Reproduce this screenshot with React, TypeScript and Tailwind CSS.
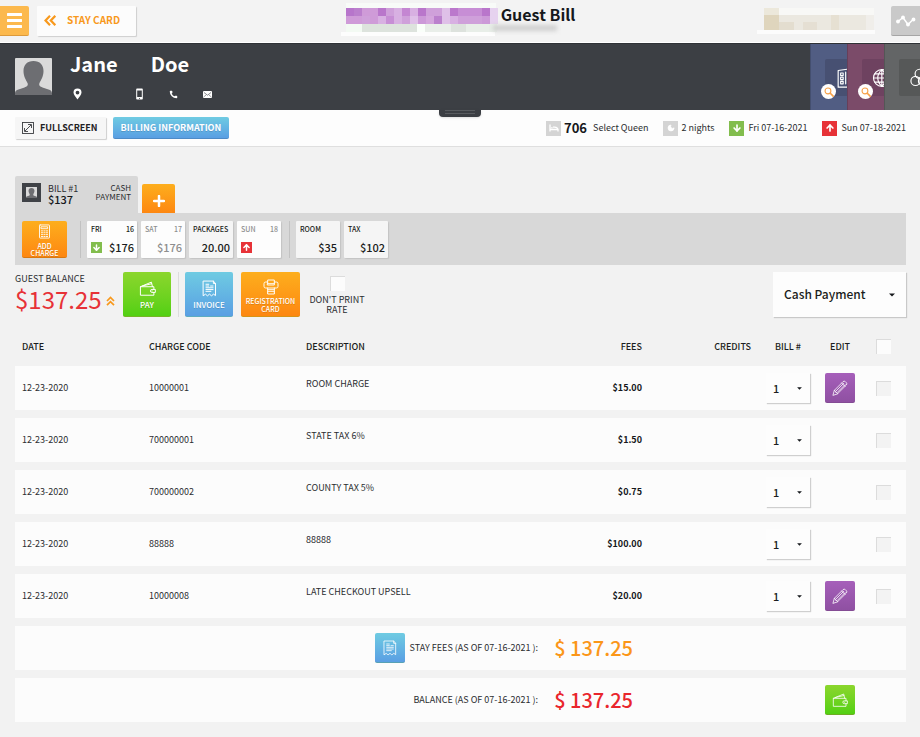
import { useState, type ReactNode } from "react";
import { clsx } from "clsx";
import { ArrowDown, ArrowUp, Moon, Phone } from "lucide-react";

const charges = [
  { date: "12-23-2020", code: "10000001", description: "ROOM CHARGE", fees: "$15.00", editable: true },
  { date: "12-23-2020", code: "700000001", description: "STATE TAX 6%", fees: "$1.50", editable: false },
  { date: "12-23-2020", code: "700000002", description: "COUNTY TAX 5%", fees: "$0.75", editable: false },
  { date: "12-23-2020", code: "88888", description: "88888", fees: "$100.00", editable: false },
  { date: "12-23-2020", code: "10000008", description: "LATE CHECKOUT UPSELL", fees: "$20.00", editable: true },
];

/* Redacted property name, one colour per tile */
const tilesTop = "#b775cb #bb7fcd #cf9bd8 #cf9bd8 #b976cb #cfa0da #d8b0e2 #c486d2 #d8b0e2 #b976cb #cfa0da #cfa0da #dfc0e8 #bb78cc #c78ed5 #c78ed5 #c78ed5 #b976cb #e6d2ef".split(" ");
const tilesBottom = "#cf9bd8 #cf9bd8 #cfa0da #cf9bd8 #d8b0e2 #c78ed5 #d8b0e2 #cfa0da #dfc0e8 #cc99d8 #d4a5dd #bb80cd #dfc0e8 #d8b0e2 #cfa0da #cfa0da #cfa0da #cc99d8 #e6d2ef".split(" ");

const orange = "bg-linear-to-b from-[#fdae1d] to-[#fd8711]";
const green = "bg-linear-to-b from-[#8bd62d] to-[#52d013]";
const blue = "bg-linear-to-b from-[#6fcbe2] to-[#5a9fe3]";
const purple = "bg-linear-to-b from-[#a65fba] to-[#8f50a2]";

function Glyph({ className, children }: { className?: string; children: ReactNode }) {
  return (
    <svg
      viewBox="0 0 24 24"
      className={className}
      fill="none"
      stroke="currentColor"
      strokeWidth="1.4"
      strokeLinejoin="round"
      strokeLinecap="round"
      aria-hidden="true"
    >
      {children}
    </svg>
  );
}

function WalletIcon({ className }: { className?: string }) {
  return (
    <Glyph className={className}>
      <path d="M2 9.5h19v3.8M21 17.5v4H2v-12L17.5 3l1.5 6.5M5 8.3l12.8-3" />
      <path d="M22.5 13.3h-4.2a2.1 2.1 0 0 0 0 4.2h4.2z" />
      <path d="M18.4 15.4h.3" />
    </Glyph>
  );
}

function InvoiceIcon({ className }: { className?: string }) {
  return (
    <Glyph className={className}>
      <path d="M3.5 1.5h14l3 3.5v17l-2.8-2-2.9 2.3-2.8-2.3-2.9 2.3-2.8-2.3-2.8 2zM17.5 1.5V5h3" />
      <path d="M7 6h4M7 8.5h4M7 11h10M7 13.5h10M7 16h7M13.5 8.5h3.5" />
    </Glyph>
  );
}

function CardPrinterIcon({ className }: { className?: string }) {
  return (
    <Glyph className={className}>
      <path d="M7 7V1.5h10V7M7 9h10V7H7zM7 4.500H4a2.500 2.500 0 0 0-2.500 2.500v4A2.500 2.500 0 0 0 4 13.500h16a2.500 2.500 0 0 0 2.500-2.500V7A2.500 2.500 0 0 0 20 4.500h-3" />
      <path d="M7 16h10M7 18.500h10M7 21v1.500h10V21M7 13.500V21M17 13.500V21" />
    </Glyph>
  );
}

function CalculatorIcon({ className }: { className?: string }) {
  return (
    <Glyph className={className}>
      <rect x="4" y="1.5" width="16" height="21" rx="1" />
      <path d="M7 4.5h10v3H7zM7 11h2M11 11h2M15 11h2M7 14h2M11 14h2M15 14h2M7 17h2M11 17h2M15 17h2M7 20h2M11 20h2M15 20h2" />
    </Glyph>
  );
}

function PencilIcon({ className }: { className?: string }) {
  return (
    <Glyph className={className}>
      <path d="M1.5 22.5l2-7L16.500 2.500a2.500 2.500 0 0 1 3.500 0l1.500 1.500a2.500 2.500 0 0 1 0 3.500L8.500 20.500zM3.500 15.500l1.500 1 .5 2 2 .5 1 1.500M6 16.500L17.500 5M8 18.500L19.500 7M14.500 4.500l5 5" />
    </Glyph>
  );
}

function Silhouette({ className }: { className?: string }) {
  return (
    <svg viewBox="0 0 37 37" className={className} aria-hidden="true">
      <rect width="37" height="37" rx="1" fill="#dadada" />
      <path
        d="M18.5 3C12 3 8.5 7 8.5 13c0 5.500 2.500 9 4 12 1 2.500-.5 3.500-3 4.500L2 32c-1.500.8-2 2-2 3.500V37h37v-1.500c0-1.500-.5-2.700-2-3.500l-7.500-2.500c-2.500-1-4-2-3-4.500 1.500-3 4-6.500 4-12C28.500 7 25 3 18.500 3z"
        fill="#6d6e72"
      />
    </svg>
  );
}

function Caret({ className }: { className: string }) {
  return (
    <svg viewBox="0 0 8 5" className={className} aria-hidden="true">
      <path d="M0 .5h8L4 4.500z" fill="#16191c" />
    </svg>
  );
}

function Check({ label, muted }: { label: string; muted?: boolean }) {
  return (
    <input
      type="checkbox"
      aria-label={label}
      className={clsx(
        "block size-[15px] appearance-none border-t border-l border-[#dcdcdc] checked:bg-[#5a9fe3]",
        muted ? "bg-[#f3f3f3]" : "bg-[#fcfcfc]"
      )}
    />
  );
}

function Mosaic() {
  return (
    <svg viewBox="0 0 164 34" className="h-[34px] w-[164px] shrink-0" shapeRendering="crispEdges" aria-hidden="true">
      <rect x="5" width="150" height="5" fill="#f8fbf8" />
      {tilesTop.map((color, i) => (
        <rect key={i} x={5 + i * 8} y="5" width="8" height="8" fill={color} />
      ))}
      {tilesBottom.map((color, i) => (
        <rect key={i} x={5 + i * 8} y="13" width="8" height="8" fill={color} />
      ))}
      <rect x="5" y="21" width="16" height="8" fill="#f3faf3" />
      <rect x="21" y="21" width="55" height="8" fill="#dde3dd" />
      <rect x="76" y="21" width="8" height="8" fill="#fafffa" />
      <rect x="84" y="21" width="26" height="8" fill="#e9eee9" />
      <rect x="110" y="21" width="15" height="8" fill="#dde2dd" />
      <rect x="125" y="21" width="31" height="8" fill="#e8eee8" />
      <rect y="29" width="154" height="4" fill="#fdfdfd" />
    </svg>
  );
}

function SidePanel({ color, tile, search, children }: { color: string; tile: string; search?: string; children: ReactNode }) {
  return (
    <div className={clsx("relative overflow-hidden border-l border-black/15 pt-[15px] pl-[14px]", color)}>
      <div className={clsx("flex size-[37px] items-center justify-center rounded-[2px] text-white", tile)}>{children}</div>
      {search && (
        <button
          aria-label={search}
          className="absolute top-[40px] left-[10px] flex size-[15px] items-center justify-center rounded-full bg-white text-[#f7a24a]"
        >
          <Glyph className="size-[10px]">
            <circle cx="9.5" cy="9.5" r="7" strokeWidth="2.6" />
            <path d="M15 15l7 7" strokeWidth="4" />
          </Glyph>
        </button>
      )}
    </div>
  );
}

function DirectionBadge({ up, small }: { up?: boolean; small?: boolean }) {
  const Arrow = up ? ArrowUp : ArrowDown;
  return (
    <span
      className={clsx(
        "flex shrink-0 items-center justify-center text-white",
        up ? "bg-[#e73237]" : "bg-[#82bd4d]",
        small ? "size-[11px]" : "size-[15px]"
      )}
    >
      <Arrow className={small ? "size-[9px]" : "size-[10px]"} strokeWidth={4} />
    </span>
  );
}

function SummaryCard(props: { label: string; day?: string; value?: string; badge?: "up" | "down"; muted?: boolean; wide?: boolean; tint?: boolean }) {
  return (
    <div
      className={clsx(
        "flex h-[37px] flex-col justify-between rounded-[1px] pt-1 pr-[3px] pb-[3px] pl-1 shadow-[1px_1px_1px_#c4c4c4]",
        props.wide ? "w-[50px]" : "w-[44px]",
        props.tint ? "bg-[#f5f5f5]" : "bg-[#fdfdfd]",
        props.muted ? "text-[#8e8e8e]" : "text-[#1b1d20]"
      )}
    >
      <div className="flex justify-between text-[7px] leading-[9px] font-medium">
        <span>{props.label}</span>
        <span>{props.day}</span>
      </div>
      <div className="flex h-[15px] items-center justify-between text-[11px] leading-[15px] font-medium">
        {props.badge ? <DirectionBadge up={props.badge === "up"} small /> : <span />}
        <span>{props.value}</span>
      </div>
    </div>
  );
}

function ActionButton({ label, color, wide, children }: { label: string; color: string; wide?: boolean; children: ReactNode }) {
  return (
    <button
      className={clsx(
        "flex h-[45px] flex-col items-center justify-center rounded-[2px] border-b border-black/15 leading-2 font-medium text-white text-shadow-2xs",
        color,
        wide ? "w-[59px] pt-[3px] text-[7px]" : "w-[48px] text-[8px]"
      )}
    >
      {children}
      <span>{label}</span>
    </button>
  );
}

function SquareButton({ label, color, children }: { label: string; color: string; children: ReactNode }) {
  return (
    <button
      aria-label={label}
      className={clsx("flex size-[30px] shrink-0 items-center justify-center rounded-[2px] border-b border-black/20 text-white/85", color)}
    >
      {children}
    </button>
  );
}

export default function App() {
  const [method, setMethod] = useState("Cash Payment");

  return (
    <div className="min-h-screen bg-[#f2f2f2] pb-2 font-['Noto_Sans_CJK_SC','Open_Sans',sans-serif] text-[9px] leading-3 text-[#2b2d30]">
      {/* Top bar */}
      <header className="grid h-[43px] grid-cols-[1fr_auto_1fr] border-b border-white bg-[#f3f3f3]">
        <div className="flex items-start gap-2 pt-[6px]">
          <button aria-label="Menu" className="flex h-[30px] w-[29px] items-center justify-center rounded-r-[2px] border-b border-[#dc9a3c] bg-[#fcb94d]">
            <svg viewBox="0 0 15 15" className="size-[15px]" aria-hidden="true">
              <path d="M1 1.5h13M1 7.5h13M1 13.5h13" stroke="#fff" strokeWidth="3" strokeLinecap="round" />
            </svg>
          </button>
          <button className="flex h-[30px] w-[99px] items-center gap-[11px] rounded-[1px] bg-[#fcfcfc] pb-[2px] pl-[7px] text-[10px] font-bold text-[#f8991d] shadow-[1px_1px_1px_#cfcfcf]">
            <svg viewBox="0 0 12 11" className="h-[11px] w-[12px]" fill="none" stroke="currentColor" strokeWidth="2.2" aria-hidden="true">
              <path d="M6 .8L1.500 5.500 6 10.200M11.300.8L6.800 5.500l4.500 4.700" />
            </svg>
            STAY CARD
          </button>
        </div>
        <div className="flex items-start pt-[3px] pr-1">
          <Mosaic />
          <div className="-ml-1">
            <h1 className="text-[16px] leading-[22px] font-bold text-[#16181b]">Guest Bill</h1>
            <div className="-ml-2 h-[6px] w-[64px] bg-[#cfcfcf] blur-[2px]" />
          </div>
        </div>
        <div className="flex items-start justify-end gap-4 pt-[6px]">
          <svg viewBox="0 0 118 28" className="h-[28px] w-[118px]" shapeRendering="crispEdges" aria-hidden="true">
            <rect x="7" y="2" width="110" height="7" fill="#f8f8f6" />
            <rect x="7" y="9" width="15" height="15" fill="#dfd5bd" />
            <rect x="22" y="9" width="87" height="15" fill="#ebe8e0" />
            <rect x="22" y="16" width="15" height="8" fill="#e3ddcf" />
            <rect x="46" y="16" width="14" height="8" fill="#e5dfd3" />
            <rect x="74" y="9" width="8" height="15" fill="#e6e0d2" />
            <rect x="7" y="2" width="15" height="7" fill="#ece8db" />
            <rect x="109" y="9" width="8" height="15" fill="#f0eeea" />
            <rect y="24" width="118" height="4" fill="#fcfcfc" />
          </svg>
          <button aria-label="Activity" className="flex h-[30px] w-[29px] items-center justify-center rounded-l-[2px] border-b border-[#a5a5a5] bg-[#c9c9c9] text-white">
            <svg viewBox="0 0 20 12" className="h-[12px] w-[20px]" fill="none" stroke="currentColor" strokeWidth="1.5" aria-hidden="true">
              <path d="M2 6.500l5-4 5 7 5-5" />
              <g fill="currentColor">
                <circle cx="2" cy="6.500" r="1.2" />
                <circle cx="7" cy="2.500" r="1.2" />
                <circle cx="12" cy="9.500" r="1.2" />
                <circle cx="17.500" cy="4.500" r="1.2" />
              </g>
            </svg>
          </button>
        </div>
      </header>

      {/* Guest banner */}
      <section className="relative flex h-[67px] justify-between border-t border-[#2f3236] bg-[#3c3f44] text-white">
        <div className="flex gap-[18px] pt-2 pl-[15px]">
          <Silhouette className="mt-[6px] size-[37px]" />
          <div>
            <h2 className="flex gap-[33px] text-[20px] leading-6 font-bold">
              <span>Jane</span>
              <span>Doe</span>
            </h2>
            <div className="mt-3 flex items-center pl-[3px]">
              <svg viewBox="0 0 9 12" className="mr-[54px] h-[12px] w-[9px]" aria-hidden="true">
                <path fillRule="evenodd" d="M4.5.5a4 4 0 0 0-4 4c0 2.500 2.500 4.500 4 7 1.500-2.500 4-4.500 4-7a4 4 0 0 0-4-4zm0 2.200a1.900 1.900 0 1 1 0 3.800 1.900 1.900 0 0 1 0-3.800z" fill="#fff" />
              </svg>
              <svg viewBox="0 0 7 12" className="mr-[26px] h-[12px] w-[7px]" aria-hidden="true">
                <path fillRule="evenodd" d="M1 .5h5q.8 0 .8.800v9.400q0 .8-.8.800H1q-.8 0-.8-.8V1.300Q.2.5 1 .5zM1.200 2.500v6.500h4.600V2.500zM3 10v.7h1V10z" fill="#fff" />
              </svg>
              <Phone className="mr-[25px] size-[9px]" fill="#fff" strokeWidth={0} />
              <svg viewBox="0 0 9 7" className="h-[7px] w-[9px]" aria-hidden="true">
                <rect width="9" height="7" rx="1" fill="#fff" />
                <path d="M1 1.500l3.500 2.700L8 1.500M1 5.800l2-2M8 5.800l-2-2" fill="none" stroke="#3c3f44" strokeWidth=".6" />
              </svg>
            </div>
          </div>
        </div>
        <div className="grid grid-cols-[37px_37px_36px]">
          <SidePanel color="bg-[#515d83]" tile="bg-[#475072]" search="Search rooms">
            <Glyph className="size-[20px]">
              <path d="M5 3l14-2v22H5zM8 6h3v3H8zM8 11h3v3H8zM8 16h3v3H8zM14 5v14M16.5 5v14" />
            </Glyph>
          </SidePanel>
          <SidePanel color="bg-[#7b4b69]" tile="bg-[#6e4260]" search="Search web">
            <Glyph className="size-[20px]">
              <circle cx="13" cy="12" r="10" />
              <path d="M3 12h20M13 2v20M4.500 7h17M4.500 17h17M13 2c-6.500 6-6.500 14 0 20M13 2c6.500 6 6.500 14 0 20" />
            </Glyph>
          </SidePanel>
          <SidePanel color="bg-[#636566]" tile="bg-[#565858]">
            <Glyph className="size-[20px] shrink-0">
              <circle cx="14" cy="7" r="5.500" />
              <circle cx="9" cy="15.500" r="5.500" />
              <circle cx="18" cy="15.500" r="5.500" />
            </Glyph>
          </SidePanel>
        </div>
        <button aria-label="Expand guest details" className="absolute top-full left-1/2 flex h-[7px] w-[42px] -translate-x-1/2 flex-col items-center gap-[2px] rounded-b-[4px] bg-[#3a3d42] shadow-sm">
          <span className="h-px w-[30px] bg-[#575a5e]" />
          <span className="h-px w-[30px] bg-[#575a5e]" />
        </button>
      </section>

      {/* Stay details */}
      <section className="flex h-[37px] items-center justify-between border-b border-[#dfdfdf] bg-[#fdfdfd] pr-[14px] pl-[15px]">
        <div className="flex items-center gap-[7px]">
          <button className="flex h-[22px] items-center gap-[6px] rounded-[1px] bg-[#f6f6f6] pr-2 pl-[7px] font-bold text-[#1f2124] shadow-[1px_1px_1px_#cfcfcf]">
            <svg viewBox="0 0 12 12" className="size-[12px]" fill="none" stroke="#3a3c3f" strokeWidth=".9" aria-hidden="true">
              <rect x=".5" y=".5" width="11" height="11" />
              <path d="M3 9l6-6M6 2.500h3.500V6M2.500 6v3.500H6" />
            </svg>
            FULLSCREEN
          </button>
          <button className={clsx("h-[22px] rounded-[2px] border-b border-[#4d8bc7] px-2 font-bold text-white text-shadow-2xs", blue)}>
            BILLING INFORMATION
          </button>
        </div>
        <div className="flex items-center gap-[15px]">
          <div className="flex items-center gap-[3px]">
            <span className="flex size-[15px] items-center justify-center bg-[#d4d4d4]">
              <svg viewBox="0 0 10 8" className="h-[8px] w-[10px]" fill="none" stroke="#fff" strokeWidth="1.3" aria-hidden="true">
                <path d="M1 .5v7M1 5.500h8v2M9 5.500C8.500 3 6 2.800 4 3.200" />
                <path d="M2.300 3.700h1.200" strokeWidth="1.600" />
              </svg>
            </span>
            <span className="text-[13px] font-bold text-[#16181b]">706</span>
            <span className="ml-[3px]">Select Queen</span>
          </div>
          <div className="flex items-center gap-[3px]">
            <span className="flex size-[15px] items-center justify-center bg-[#d4d4d4] text-white">
              <Moon className="size-[8px]" fill="#fff" />
            </span>
            2 nights
          </div>
          <div className="flex items-center gap-1">
            <DirectionBadge />
            Fri 07-16-2021
          </div>
          <div className="flex items-center gap-1">
            <DirectionBadge up />
            Sun 07-18-2021
          </div>
        </div>
      </section>

      <main className="px-[14px] pt-[29px] pl-[15px]">
        {/* Bill tabs */}
        <div className="flex items-end gap-1">
          <button className="flex h-[37px] w-[123px] items-start rounded-t-[2px] bg-[#d8d8d8] px-[7px] pt-[7px] text-left">
            <span className="flex size-[19px] items-center justify-center bg-[#3f4247]">
              <Silhouette className="size-[11px]" />
            </span>
            <span className="ml-[7px] leading-[11px]">
              BILL #1
              <span className="block text-[11px] leading-[10px] font-medium text-[#16181b]">$137</span>
            </span>
            <span className="ml-auto text-right text-[8px] leading-[9px]">
              CASH
              <br />
              PAYMENT
            </span>
          </button>
          <button aria-label="Add bill" className={clsx("flex h-[29px] w-[33px] items-center justify-center rounded-t-[2px] pt-1", orange)}>
            <svg viewBox="0 0 12 12" className="size-[12px]" aria-hidden="true">
              <path d="M6 1v10M1 6h10" stroke="#fff" strokeWidth="2.500" strokeLinecap="round" />
            </svg>
          </button>
        </div>
        <div className="flex h-[52px] items-center gap-1 bg-[#d8d8d8] px-[7px]">
          <button className={clsx("flex h-[37px] w-[45px] flex-col items-center justify-end rounded-[2px] border-b border-[#d9780f] text-[7px] leading-[7px] font-medium text-white text-shadow-2xs", orange)}>
            <CalculatorIcon className="mb-[4px] size-[15px] shrink-0" />
            ADD
            <br />
            CHARGE
          </button>
          <span className="mr-[2px] ml-[9px] h-[37px] w-px bg-[#c2c2c2]" />
          <SummaryCard label="FRI" day="16" value="$176" badge="down" wide />
          <SummaryCard label="SAT" day="17" value="$176" muted />
          <SummaryCard label="PACKAGES" value="20.00" tint />
          <SummaryCard label="SUN" day="18" badge="up" muted />
          <span className="mr-[2px] ml-1 h-[37px] w-px bg-[#c2c2c2]" />
          <SummaryCard label="ROOM" value="$35" tint />
          <SummaryCard label="TAX" value="$102" tint />
        </div>

        {/* Balance and actions */}
        <div className="mt-[7px] flex items-start">
          <div className="w-[108px] pt-[1px]">
            <div>GUEST BALANCE</div>
            <div className="flex items-center gap-1 text-[24px] leading-7 text-[#e73237]">
              $137.25
              <svg viewBox="0 0 9 10" className="mt-1 h-[10px] w-[9px]" fill="none" stroke="#f8991d" strokeWidth="1.7" aria-hidden="true">
                <path d="M1 5l3.500-3.500L8 5M1 9.200l3.500-3.500L8 9.200" />
              </svg>
            </div>
          </div>
          <ActionButton label="PAY" color={green}>
            <WalletIcon className="mb-[4px] size-[17px]" />
          </ActionButton>
          <span className="mr-[6px] ml-[7px] h-[45px] w-px bg-[#dcdcdc]" />
          <ActionButton label="INVOICE" color={blue}>
            <InvoiceIcon className="mb-[4px] size-[17px]" />
          </ActionButton>
          <span className="w-2" />
          <ActionButton label="REGISTRATION CARD" color={orange} wide>
            <CardPrinterIcon className="mb-[2px] size-[16px]" />
          </ActionButton>
          <label className="ml-[7px] flex w-[60px] flex-col items-center gap-1 pt-1 text-center leading-[10px]">
            <Check label="Don't print rate" />
            DON'T PRINT RATE
          </label>
          <div className="relative ml-auto w-[133px]">
            <select
              aria-label="Payment method"
              value={method}
              onChange={(e) => setMethod(e.target.value)}
              className="h-[45px] w-full appearance-none rounded-none bg-[#fdfdfd] pb-[2px] pl-[11px] text-[12px] leading-5 font-medium text-[#1b1d20] shadow-[1px_1px_1px_#c9c9c9]"
            >
              <option>Cash Payment</option>
              <option>Credit Card</option>
            </select>
            <Caret className="pointer-events-none absolute top-[21px] right-[11px] h-[4px] w-[6px]" />
          </div>
        </div>

        {/* Charges */}
        <table className="mt-[10px] w-full table-fixed border-separate border-spacing-x-0 border-spacing-y-2">
          <colgroup>
            <col className="w-[134px]" />
            <col className="w-[157px]" />
            <col />
            <col className="w-[100px]" />
            <col className="w-[109px]" />
            <col className="w-[74px]" />
            <col className="w-[30px]" />
            <col className="w-[51px]" />
          </colgroup>
          <thead>
            <tr className="h-[23px] text-left text-[#1b1d20] *:p-0 *:font-medium">
              <th className="pl-[7px]!">DATE</th>
              <th>CHARGE CODE</th>
              <th>DESCRIPTION</th>
              <th className="text-right">FEES</th>
              <th className="text-right">CREDITS</th>
              <th className="text-center">BILL #</th>
              <th className="text-center">EDIT</th>
              <th className="pl-[21px]!">
                <Check label="Select all charges" />
              </th>
            </tr>
          </thead>
          <tbody>
            {charges.map((charge) => (
              <tr key={charge.code} className="h-[44px] bg-[#fcfcfc] *:p-0">
                <td className="pl-[7px]!">{charge.date}</td>
                <td>{charge.code}</td>
                <td className="pb-2!">{charge.description}</td>
                <td className="text-right font-bold text-[#16181b]">{charge.fees}</td>
                <td />
                <td>
                  <div className="relative mx-auto w-[44px]">
                    <select
                      aria-label={`Bill number for ${charge.description}`}
                      className="block h-[30px] w-full appearance-none rounded-none bg-[#fdfdfd] pl-[7px] text-[11px] leading-4 font-medium text-[#1b1d20] shadow-[1px_1px_1px_#cfcfcf]"
                    >
                      <option>1</option>
                      <option>2</option>
                    </select>
                    <Caret className="pointer-events-none absolute top-[14px] right-[8px] h-[3px] w-[5px]" />
                  </div>
                </td>
                <td>
                  {charge.editable && (
                    <SquareButton label={`Edit ${charge.description}`} color={purple}>
                      <PencilIcon className="size-[16px]" />
                    </SquareButton>
                  )}
                </td>
                <td className="pl-[21px]!">
                  <Check label={`Select ${charge.description}`} muted />
                </td>
              </tr>
            ))}
            <tr className="h-[44px] bg-[#fcfcfc] *:p-0">
              <td colSpan={4}>
                <div className="flex items-center justify-end pr-[9px]">
                  <SquareButton label="Stay fees invoice" color={blue}>
                    <InvoiceIcon className="size-[16px]" />
                  </SquareButton>
                  <span className="ml-[5px]">STAY FEES (AS OF 07-16-2021 ):</span>
                  <span className="ml-4 text-[20px] leading-6 font-medium text-[#fb9618]">$ 137.25</span>
                </div>
              </td>
              <td colSpan={4} />
            </tr>
            <tr className="h-[44px] bg-[#fcfcfc] *:p-0">
              <td colSpan={4}>
                <div className="flex items-center justify-end pr-[9px]">
                  <span>BALANCE (AS OF 07-16-2021 ):</span>
                  <span className="ml-4 text-[20px] leading-6 font-medium text-[#e9262c]">$ 137.25</span>
                </div>
              </td>
              <td colSpan={2} />
              <td>
                <SquareButton label="Pay balance" color={green}>
                  <WalletIcon className="size-[16px]" />
                </SquareButton>
              </td>
              <td />
            </tr>
          </tbody>
        </table>
      </main>
    </div>
  );
}
